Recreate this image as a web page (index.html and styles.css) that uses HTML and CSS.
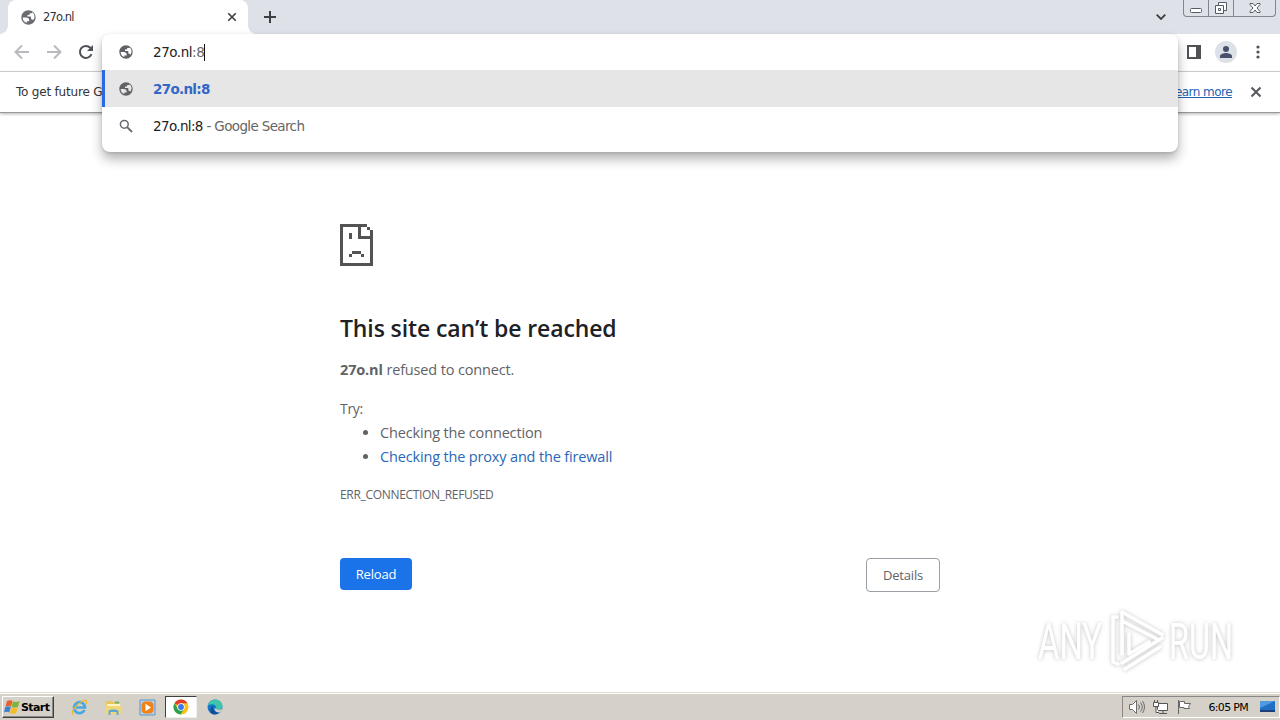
FILE: index.html
```
<!DOCTYPE html>
<html lang="en">
<head>
    <meta charset="UTF-8">
    <meta name="viewport" content="width=device-width, initial-scale=1.0">
    <title>27o.nl</title>
    <link rel="stylesheet" href="styles.css">
</head>
<body>

<!-- Shared symbols -->
<svg class="defs" width="0" height="0">
    <symbol id="globe" viewBox="1.5 1.5 21 21">
        <path d="M12 2C6.480 2 2 6.480 2 12s4.480 10 10 10 10-4.480 10-10S17.520 2 12 2zM4 12h4.400c3.410.020 4.920 1.730 4.540 5.130H9.490v2.470A8 8 0 0 1 4 12zm14.400 4c-.250-.900-.900-1.500-1.800-1.500h-1v-3c0-.600-.400-1-1-1H10.500V8.400h2.200c.600 0 1-.400 1-1V6h2c1 0 1.700-.500 1.900-1.300A8 8 0 0 1 18.400 16z"/>
    </symbol>
    <symbol id="cross" viewBox="0 0 12 12">
        <path d="M1.500 1.500l9 9M10.500 1.500l-9 9" fill="none" stroke="currentColor" stroke-width="2"/>
    </symbol>
</svg>

<div class="tab-strip">
    <div class="tab">
        <svg class="tab-icon"><use href="#globe"/></svg>
        <span class="tab-title">27o.nl</span>
        <svg class="tab-close"><use href="#cross"/></svg>
    </div>
    <svg class="new-tab" viewBox="0 0 12 12"><path d="M6 0v12M0 6h12" stroke="#3c4043" stroke-width="2"/></svg>
    <svg class="tab-search" viewBox="0 0 10 6"><path d="M.7.7L5 5 9.300.7" fill="none" stroke="#3c4043" stroke-width="1.800"/></svg>
    <div class="window-buttons">
        <div class="win-btn min"><svg width="14" height="16"><rect x="1.500" y="8.500" width="11" height="4" rx="1" fill="#fff" stroke="#555a66"/></svg></div>
        <div class="win-btn max"><svg width="14" height="16"><path d="M4.500 2.500h8v8h-8z" fill="#fff" stroke="#555a66"/><path d="M1.500 5.500h8v8h-8z" fill="#fff" stroke="#555a66"/><path d="M4.500 8.500h2v2h-2z" fill="none" stroke="#555a66"/></svg></div>
        <div class="win-btn close"><svg width="14" height="16"><path d="M2 3.500h3L7 6l2-2.500h3v1L9 8l3 3.500v1H9L7 10l-2 2.500H2v-1L5 8 2 4.500z" fill="#fff" stroke="#555a66"/></svg></div>
    </div>
</div>

<div class="toolbar">
    <svg class="nav-icon off" viewBox="0 0 16 16"><path d="M15 8H2M8 1.500L1.500 8 8 14.500"/></svg>
    <svg class="nav-icon off" viewBox="0 0 16 16"><path d="M1 8h13M8 1.500L14.500 8 8 14.500"/></svg>
    <svg class="nav-icon" viewBox="0 0 16 16"><path d="M13.500 10.200A6 6 0 1 1 12.300 3.800L14 5.500"/><path d="M15 1v6H9z" fill="#4f5257" stroke="none"/></svg>
    <div class="toolbar-right">
        <svg width="14" height="14"><path d="M1 1h12v12H1z" fill="none" stroke="#505256" stroke-width="2"/><path d="M9 1h4v12H9z" fill="#505256"/></svg>
        <div class="avatar"><svg width="12" height="12"><circle cx="6" cy="3" r="3" fill="#46506c"/><path d="M0 12v-2c0-2 4-3 6-3s6 1 6 3v2z" fill="#46506c"/></svg></div>
        <svg width="4" height="14" fill="#505256"><circle cx="2" cy="2" r="1.600"/><circle cx="2" cy="7" r="1.600"/><circle cx="2" cy="12" r="1.600"/></svg>
    </div>
</div>

<div class="infobar">
    <span class="info-text">To get future G</span>
    <a class="learn-more" href="#">Learn more</a>
    <svg class="info-close"><use href="#cross"/></svg>
</div>

<main class="page">
    <div class="error-box">
        <!-- 3px pixel grid -->
        <svg class="sad-page" viewBox="0 0 11 14" shape-rendering="crispEdges" fill="#535353">
            <path d="M0 0h9v1H7v3h4v10H0zM1 1v12h9V5H6V1z" fill-rule="evenodd"/>
            <path d="M9 1h1v1H9zM10 2h1v3h-1zM3 3h1v2H3zM4 9h3v1H4zM3 10h1v1H3zM7 10h1v1H7z"/>
        </svg>
        <h1>This site can’t be reached</h1>
        <p class="summary"><strong>27o.nl</strong> <span>refused to connect.</span></p>
        <p class="try">Try:</p>
        <ul class="suggestions">
            <li><span class="check">Checking the connection</span></li>
            <li><a class="proxy" href="#">Checking the proxy and the firewall</a></li>
        </ul>
        <div class="error-code">ERR_CONNECTION_REFUSED</div>
        <div class="actions">
            <button class="reload">Reload</button>
            <button class="details">Details</button>
        </div>
    </div>
</main>

<div class="taskbar">
    <button class="start">
        <svg width="17" height="16" viewBox="0 0 17 16">
            <path d="M3 2c2-1.300 4-1 5.500 0L7 7.500c-1.500-1-3.500-1-5.500 0z" fill="#e8602c"/>
            <path d="M9 2.300c2 1 4 1 6.500-.3L14 7.800c-2 1.200-4 1-6.500-.1z" fill="#7cb43c"/>
            <path d="M1.300 8c2-1 4-1 5.500 0L5.200 13.500c-1.500-1-3.500-1-5.200 0z" fill="#3d7fd0"/>
            <path d="M7.300 8.300c2 1 4 1 6.400.1l-1.500 5.700c-2 1.200-4 1-6.400-.1z" fill="#f4bd27"/>
        </svg>
        <span>Start</span>
    </button>
    <div class="quick">
        <div class="app">
            <svg width="17" height="17" viewBox="0 0 17 17"><path d="M13.500 11A5.500 5.500 0 1 1 14 8.500H5" fill="none" stroke="#45a9e4" stroke-width="2.700"/><path d="M2 15.500C-.5 13 5 5 12 2c3-1.200 4.500-.5 3 3" fill="none" stroke="#e9b72c" stroke-width="1.300"/></svg>
        </div>
        <div class="app">
            <svg width="17" height="17" viewBox="0 0 17 17"><path d="M1 3l1-1h5l1 1h7v11H1z" fill="#e9c65b"/><path d="M2 5h13v3H2z" fill="#fbf3c4"/><path d="M10 2.500h4v2h-4z" fill="#67b86c"/><path d="M1 7h15v8H1z" fill="#f0d878"/><path d="M3.500 16v-4c0-2 10-2 10 0v4h-2v-3h-6v3z" fill="#5fa8d6"/></svg>
        </div>
        <div class="app">
            <svg width="17" height="17" viewBox="0 0 17 17"><path d="M1 1h15v15H1z" fill="#b5d4ee" stroke="#5e95c7"/><path d="M3.500 3.500h10v10h-10z" fill="#f28118"/><path d="M5 2.500h7l2.500 2.500v7L12 14.500H5L2.500 12V5z" fill="#f28118"/><path d="M6.500 4.700l5.500 3.800-5.500 3.800z" fill="#fff"/></svg>
        </div>
        <div class="app active">
            <svg width="16" height="16" viewBox="0 0 16 16"><circle cx="8" cy="8" r="7.500" fill="#fbc116"/><path d="M8 8L1.500 4.200A7.500 7.500 0 0 1 14.500 4.300H8z" fill="#e33b2e"/><path d="M8 8L4.800 9.900 1.500 4.200A7.500 7.500 0 0 0 7.500 15.500l3.700-5.600z" fill="#2da04e"/><circle cx="8" cy="8" r="3.700" fill="#fff"/><circle cx="8" cy="8" r="2.900" fill="#3b79e6"/></svg>
        </div>
        <div class="app">
            <svg width="16" height="16" viewBox="0 0 16 16"><circle cx="8" cy="8" r="7.500" fill="#1678c8"/><path d="M.6 7C1.500 2.500 5 .5 8.200.5c4.300 0 7.300 3.200 7.300 6.300 0 2.400-1.700 3.900-4 3.900-1.800 0-2.500-.7-2.300-1.500C9.700 7 7.500 5.200 5 5.200 3 5.200 1.300 6 .6 7z" fill="#3fc5ad"/><path d="M7 6.500C5 8 5.500 13 12.500 13.500 10 15.500 7 15.800 5 15 2 12.500 3 7 7 6.500z" fill="#124f9b"/><path d="M9.200 9.200c-.2 1.500 3 2.300 6 .5-.3 1.500-1.300 3-2.500 3.800-3 .3-5.200-1.500-5.200-3.700z" fill="#d6d2ca"/></svg>
        </div>
    </div>
    <div class="tray">
        <svg width="17" height="16" fill="none" stroke="#6c6c6c"><path d="M1.500 5.500h3l4-4v13l-4-4h-3z" fill="#fff"/><path d="M10.500 5.500q2 2.500 0 5M12.500 3.500q3.500 4.500 0 9M14.500 2q4 6 0 12"/></svg>
        <svg width="17" height="16" fill="#fff" stroke="#555"><path d="M5.500 4.500h10v7h-10zM7 14.500h8M11 12v2"/><path d="M1.500 3.500h5v4h-5zM2.500 1v2M5.500 1v2M4 8v5.500h3"/></svg>
        <svg width="17" height="16" fill="#fff" stroke="#666"><path d="M2.500 1v14" /><path d="M3.500 2.500h5v2h6l-2 3 1 2H8v-1H3.500z"/></svg>
        <span class="clock">6:05 PM</span>
        <svg width="17" height="14"><path d="M1 1h15v10H1z" fill="#1f6fc5"/><path d="M1 1h15L1 8z" fill="#4e9be0"/><path d="M1 10h15v2H1z" fill="#1c3f78"/></svg>
    </div>
</div>

<!-- Omnibox popup -->
<div class="omnibox">
    <div class="omni-row input">
        <svg class="omni-icon"><use href="#globe"/></svg>
        <span class="typed">27o.nl<span class="port">:8</span></span><i class="caret"></i>
    </div>
    <div class="omni-row selected">
        <svg class="omni-icon"><use href="#globe"/></svg>
        <span class="match">27o.nl:8</span>
    </div>
    <div class="omni-row">
        <svg class="omni-icon search" viewBox="0 0 14 14"><circle cx="5.300" cy="5.300" r="3.900" fill="none" stroke="#686b70" stroke-width="1.500"/><path d="M8 8l5 5" stroke="#686b70" stroke-width="1.800"/></svg>
        <span class="query">27o.nl:8 <span class="engine">- Google Search</span></span>
    </div>
</div>

<!-- Watermark -->
<svg class="watermark" width="230" height="80" viewBox="0 0 230 80">
    <g class="mark">
        <text x="18" y="59" textLength="64" lengthAdjust="spacingAndGlyphs">ANY</text>
        <text x="149" y="59" textLength="64" lengthAdjust="spacingAndGlyphs">RUN</text>
        <path d="M97 17h-4v45l5 2M102 54V12l40 22.500M102 21l35 18M109 34v20l20-12M102 63l40-25M105 69l35-22" fill="none" stroke="#fff" stroke-width="3.500" stroke-linecap="round" stroke-linejoin="round"/>
    </g>
</svg>

</body>
</html>
```
FILE: styles.css
```
* {
    box-sizing: border-box;
}

body {
    margin: 0;
    width: 1280px;
    height: 720px;
    overflow: hidden;
    display: flex;
    flex-direction: column;
    position: relative;
    background: #fff;
    font-family: "Open Sans", "Noto Sans", sans-serif;
    color: #333;
}

svg {
    display: block;
    flex: none;
}

.defs {
    position: absolute;
}

span, a, strong {
    white-space: nowrap;
}

/* Tabs */
.tab-strip {
    height: 34px;
    flex: none;
    display: flex;
    align-items: center;
    background: #dee1e8;
    padding-left: 8px;
}

.tab {
    position: relative;
    width: 240px;
    height: 34px;
    display: flex;
    align-items: center;
    padding: 0 11px 0 12px;
    background: #fff;
    border-radius: 8px 8px 0 0;
}

/* flared bottom corners */
.tab::before, .tab::after {
    content: "";
    position: absolute;
    bottom: 0;
    width: 8px;
    height: 8px;
}

.tab::before {
    left: -8px;
    background: radial-gradient(circle at 0 0, transparent 7.5px, #fff 8px);
}

.tab::after {
    right: -8px;
    background: radial-gradient(circle at 100% 0, transparent 7.5px, #fff 8px);
}

.tab-icon {
    width: 15px;
    height: 15px;
    margin: 0 1px;
    fill: #6a6c70;
}

.tab-title {
    margin-left: 6px;
    font: 11.5px "DejaVu Sans", sans-serif;
    letter-spacing: -0.85px;
}

.tab-close {
    width: 10px;
    height: 10px;
    margin-left: auto;
    color: #3c4043;
}

.new-tab {
    width: 12px;
    height: 12px;
    margin-left: 16px;
}

.tab-search {
    width: 10px;
    height: 6px;
    margin-left: auto;
}

.window-buttons {
    display: flex;
    align-self: flex-start;
    height: 17px;
    margin: 0 4px 0 17px;
    border: 1px solid #81858f;
    border-top: none;
    border-radius: 0 0 4px 4px;
}

.win-btn {
    width: 25px;
    display: flex;
    justify-content: center;
    border-right: 1px solid #81858f;
}

.win-btn.close {
    width: 41px;
    border-right: none;
}

/* Toolbar */
.toolbar {
    height: 38px;
    flex: none;
    display: flex;
    align-items: center;
    gap: 16px;
    padding: 0 20px 2px 14px;
    border-bottom: 1px solid #d5d6d8;
}

.nav-icon {
    width: 16px;
    height: 16px;
    fill: none;
    stroke: #4f5257;
    stroke-width: 2;
}

.nav-icon.off {
    stroke: #b9babd;
}

.toolbar-right {
    display: flex;
    align-items: center;
    margin-left: auto;
}

.avatar {
    width: 22px;
    height: 22px;
    margin: 0 19px 0 14px;
    display: flex;
    align-items: center;
    justify-content: center;
    border-radius: 50%;
    background: #dce0e7;
}

/* Info bar */
.infobar {
    height: 41px;
    flex: none;
    display: flex;
    align-items: center;
    padding: 0 18px 1px 16px;
    border-bottom: 1px solid #999;
    box-shadow: 0 1px 3px rgba(0, 0, 0, 0.3);
    font: 12px "DejaVu Sans", sans-serif;
    letter-spacing: -0.55px;
}

.info-text {
    letter-spacing: -0.2px;
}

.learn-more {
    margin-left: auto;
    color: #2462b5;
}

.info-close {
    width: 12px;
    height: 12px;
    margin-left: 18px;
    color: #55575b;
}

/* Error page */
.page {
    flex: 1;
    padding-top: 111px;
}

.error-box {
    width: 600px;
    margin: 0 auto;
    font-size: 15px;
    line-height: 24px;
    color: #5f6368;
}

.sad-page {
    width: 33px;
    height: 42px;
}

h1 {
    margin: 48px 0 0;
    font-size: 23px;
    font-weight: 600;
    line-height: 29px;
    letter-spacing: -0.12px;
    color: #202124;
    white-space: nowrap;
}

.summary {
    margin: 15px 0 0;
    font-size: 14.5px;
    letter-spacing: -0.15px;
}

.try {
    margin: 15px 0 0;
    font-size: 14px;
    letter-spacing: -0.3px;
}

.suggestions {
    margin: 0;
    padding-left: 40px;
    font-size: 14.5px;
    letter-spacing: -0.16px;
}

.proxy {
    color: #2868b8;
    text-decoration: none;
}

.error-code {
    margin-top: 14px;
    font-size: 12px;
    letter-spacing: -0.32px;
}

.actions {
    display: flex;
    justify-content: space-between;
    margin-top: 51px;
}

.actions button {
    font: 13px "Open Sans", sans-serif;
    letter-spacing: -0.2px;
    padding: 0;
    border-radius: 4px;
}

.reload {
    width: 72px;
    height: 32px;
    border: none;
    background: #1a73e8;
    color: #fff;
}

.details {
    width: 74px;
    height: 34px;
    border: 1px solid #9aa0a6;
    background: #fff;
    color: #5f6368;
}

/* Taskbar */
.taskbar {
    height: 28px;
    flex: none;
    display: flex;
    align-items: center;
    padding-top: 1px;
    background: #d5d0c8;
    border-top: 1px solid #dedbd5;
    box-shadow: inset 0 1px #fff;
    font-family: "DejaVu Sans", sans-serif;
}

.start {
    width: 52px;
    height: 22px;
    margin-left: 2px;
    display: flex;
    align-items: center;
    padding: 0 0 0 1px;
    background: #d5d0c8;
    border: 1px solid;
    border-color: #fff #404040 #404040 #fff;
    box-shadow: inset -1px -1px #888;
    font: bold 11px "DejaVu Sans", sans-serif;
    letter-spacing: -0.6px;
    color: #000;
}

.quick {
    display: flex;
    margin-left: 9px;
    gap: 2px;
}

.app {
    width: 32px;
    height: 22px;
    display: flex;
    align-items: center;
    justify-content: center;
}

.app.active {
    background: #fff;
    border: 1px solid;
    border-color: #404040 #eee #eee #404040;
}

.tray {
    display: flex;
    align-items: center;
    gap: 7px;
    height: 22px;
    margin-left: auto;
    padding: 0 3px 0 5px;
    border: 1px solid;
    border-color: #888 #fff #fff #888;
}

.clock {
    margin: 0 4px 0 9px;
    font-size: 11px;
    letter-spacing: -0.7px;
    color: #000;
}

/* Omnibox popup */
.omnibox {
    position: absolute;
    left: 102px;
    top: 34px;
    width: 1076px;
    height: 118px;
    background: #fff;
    border-radius: 8px;
    overflow: hidden;
    box-shadow: 0 7px 12px rgba(0, 0, 0, 0.3), 0 1px 3px rgba(0, 0, 0, 0.12);
    font: 13.5px "DejaVu Sans", sans-serif;
    color: #222;
}

.omni-row {
    height: 37px;
    display: flex;
    align-items: center;
    padding-left: 16px;
}

.omni-row.input {
    height: 36px;
}

.omni-row.selected {
    padding-left: 13px;
    border-left: 3px solid #2a6ae0;
    background: #e6e6e6;
}

.omni-icon {
    width: 14px;
    height: 14px;
    margin: 0 20px 0 1px;
    fill: #606266;
}

.typed {
    letter-spacing: -0.45px;
}

.query {
    letter-spacing: -0.64px;
}

.port, .engine {
    color: #666;
}

.caret {
    width: 1px;
    height: 17px;
    background: #111;
}

.match {
    font-weight: bold;
    letter-spacing: -0.7px;
    color: #3367c6;
}

/* Watermark */
.watermark {
    position: absolute;
    left: 1020px;
    top: 600px;
    overflow: visible;
}

.mark {
    font: 400 50px Roboto, sans-serif;
    fill: #fff;
    filter: drop-shadow(0 0 2px rgba(0, 0, 0, 0.17)) drop-shadow(0 1px 2px rgba(0, 0, 0, 0.08));
}
```
